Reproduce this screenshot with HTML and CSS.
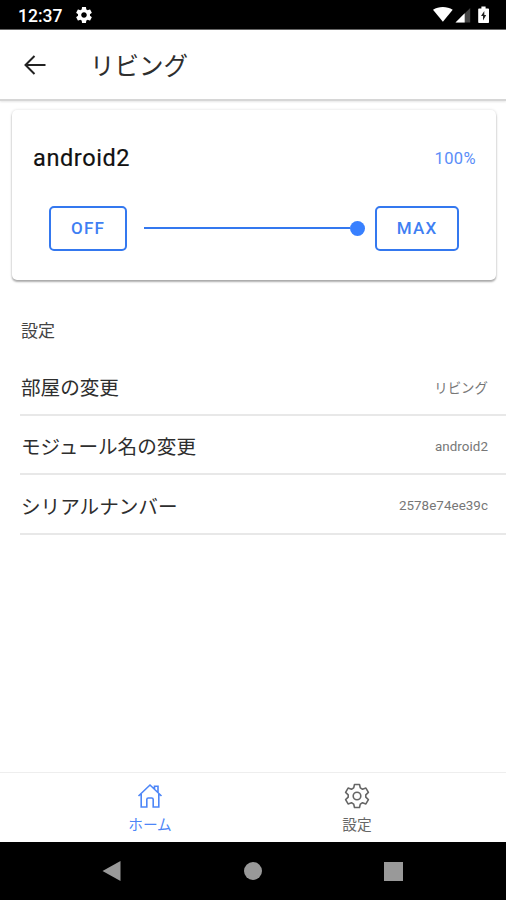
FILE: index.html
```html
<!DOCTYPE html>
<html lang="ja">
<head>
    <meta charset="UTF-8">
    <meta name="viewport" content="width=device-width, initial-scale=1.0">
    <title>リビング</title>
    <link rel="stylesheet" href="styles.css">
</head>
<body>
    <div class="status-bar">
        <span class="clock">12:37</span>
        <svg class="status-gear" viewBox="2 2 20 20" width="16" height="16">
            <path fill="#fff" fill-rule="evenodd" d="M19.43 12.98c.04-.32.07-.64.07-.98s-.03-.66-.07-.98l2.11-1.65c.19-.15.24-.42.12-.64l-2-3.46c-.12-.22-.39-.3-.61-.22l-2.49 1c-.52-.4-1.08-.73-1.69-.98l-.38-2.65C14.46 2.18 14.25 2 14 2h-4c-.25 0-.46.18-.49.42l-.38 2.65c-.61.25-1.17.59-1.69.98l-2.49-1c-.23-.09-.49 0-.61.22l-2 3.46c-.13.22-.07.49.12.64l2.11 1.65c-.04.32-.07.65-.07.98s.03.66.07.98l-2.11 1.65c-.19.15-.24.42-.12.64l2 3.46c.12.22.39.3.61.22l2.49-1c.52.4 1.08.73 1.69.98l.38 2.65c.03.24.24.42.49.42h4c.25 0 .46-.18.49-.42l.38-2.65c.61-.25 1.17-.59 1.69-.98l2.49 1c.23.09.49 0 .61-.22l2-3.46c.12-.22.07-.49-.12-.64l-2.11-1.65zM12 15.5c-1.93 0-3.5-1.57-3.5-3.5s1.57-3.5 3.5-3.5 3.5 1.57 3.5 3.5-1.57 3.5-3.5 3.5z"/>
        </svg>
        <svg class="status-icons" viewBox="0 0 58 18" width="58" height="18">
            <path fill="#fff" d="M0 3.800C5.700 0 13.900 0 19.700 3.800L9.900 15.800z"/>
            <path fill="#444" d="M37.200 2v14.500H22.500z"/>
            <path fill="#fff" d="M31.700 7.200v9.300h-9.200z"/>
            <path fill="#fff" d="M46 2.500h2.400V.5h4.200v2h2.600q.8 0 .8.800v13q0 .8-.8.800h-9.200q-.8 0-.8-.8v-13q0-.8.800-.8z"/>
            <path fill="#222" d="M51.300 5 48 10h2v4.500L53.200 9h-1.900z"/>
        </svg>
    </div>

    <header class="header">
        <svg viewBox="0 0 22 20" width="22" height="20">
            <path d="M21.500 10H2M10.500 1 1.500 10l9 9" fill="none" stroke="#222" stroke-width="2"/>
        </svg>
        <h1 class="title">リビング</h1>
    </header>

    <main class="content">
        <section class="card">
            <div class="card-head">
                <h2 class="device-name">android2</h2>
                <span class="percent">100%</span>
            </div>
            <div class="controls">
                <button class="button off">OFF</button>
                <div class="range">
                    <div class="range-bar"></div>
                    <div class="range-knob"></div>
                </div>
                <button class="button max">MAX</button>
            </div>
        </section>

        <h3 class="list-header">設定</h3>
        <ul class="list">
            <li class="item">
                <span class="label">部屋の変更</span>
                <span class="note">リビング</span>
            </li>
            <li class="item">
                <span class="label">モジュール名の変更</span>
                <span class="note">android2</span>
            </li>
            <li class="item">
                <span class="label">シリアルナンバー</span>
                <span class="note">2578e74ee39c</span>
            </li>
        </ul>
    </main>

    <nav class="tabs">
        <a class="tab selected">
            <svg viewBox="0 0 26 26" width="26" height="26">
                <path d="M1.500 13 13 2l11.500 11M17.500 6.300V3.200h3.500v6.400M4.200 11v13h5.600v-7.500q0-1.500 1.500-1.500h3.400q1.500 0 1.500 1.500V24h5.600V11" fill="none" stroke="currentColor" stroke-width="1.600"/>
            </svg>
            <span>ホーム</span>
        </a>
        <a class="tab">
            <svg viewBox="0 0 26 26" width="26" height="26">
                <path d="M10.500 1.500h5l.8 3.400 2.200 1.300 3.400-1.100 2.500 4.300-2.600 2.400v2.400l2.600 2.400-2.500 4.300-3.400-1.100-2.200 1.300-.8 3.400h-5l-.8-3.400-2.200-1.300-3.400 1.100-2.500-4.300 2.600-2.400v-2.400l-2.600-2.400 2.500-4.300 3.400 1.100 2.200-1.300z" fill="none" stroke="currentColor" stroke-width="1.600" stroke-linejoin="round"/>
                <circle cx="13" cy="13" r="3.800" fill="none" stroke="currentColor" stroke-width="1.600"/>
            </svg>
            <span>設定</span>
        </a>
    </nav>

    <div class="nav-bar">
        <svg viewBox="0 0 20 22" width="20" height="22"><path fill="#999" d="M18.500 1v20L.500 11z"/></svg>
        <div class="nav-home"></div>
        <div class="nav-recent"></div>
    </div>
</body>
</html>
```
FILE: styles.css
```css
* {
    box-sizing: border-box;
}

body {
    margin: 0;
    height: 900px;
    display: flex;
    flex-direction: column;
    overflow: hidden;
    background-color: #fff;
    color: #2e2e2e;
    font-family: Roboto, "Noto Sans CJK JP", sans-serif;
}

h1, h2, h3, ul {
    margin: 0;
    padding: 0;
    font-weight: 400;
}

.status-bar {
    height: 30px;
    background-color: #000;
    border-bottom: 1px solid #666;
    display: flex;
    align-items: center;
    padding: 1px 15px 0 18px;
    color: #fff;
}

.clock {
    width: 58px;
    font-size: 17.5px;
    font-weight: 500;
    padding-top: 2px;
}

.status-icons {
    margin-left: auto;
}

.header {
    height: 71px;
    display: flex;
    align-items: center;
    padding-left: 24px;
    border-bottom: 2px solid #d6d6d6;
    box-shadow: 0 1px 2px rgba(0, 0, 0, 0.1);
}

.title {
    margin-left: 44px;
    padding-top: 4px;
    font-size: 24.5px;
    line-height: 36px;
}

.content {
    flex: 1;
}

.card {
    margin: 9px 10px 0 12px;
    height: 170px;
    padding: 0 20px 0 21px;
    border-radius: 5px;
    box-shadow: 0 2px 2px rgba(0, 0, 0, 0.3), 0 0 3px rgba(0, 0, 0, 0.14);
}

.card-head {
    height: 96px;
    display: flex;
    align-items: center;
    justify-content: space-between;
}

.device-name {
    font-size: 23.5px;
    letter-spacing: 0.6px;
    color: #111;
    -webkit-text-stroke: 0.2px #111;
}

.percent {
    font-size: 16.5px;
    letter-spacing: 0.4px;
    color: #5b8df8;
}

.controls {
    display: flex;
    align-items: center;
    padding: 0 17px 0 16px;
}

.button {
    height: 45px;
    padding: 0 0 2px;
    border: 2px solid #3478ef;
    border-radius: 5px;
    background-color: transparent;
    color: #3f7ff3;
    font-family: inherit;
    font-size: 17px;
    font-weight: 500;
    letter-spacing: 1.2px;
}

.off {
    width: 78px;
}

.max {
    width: 84px;
}

.range {
    flex: 1;
    display: flex;
    align-items: center;
    margin: 0 10px 1px 17px;
}

.range-bar {
    flex: 1;
    height: 2px;
    background-color: #3478ef;
}

.range-knob {
    width: 15px;
    height: 15px;
    border-radius: 50%;
    background-color: #3880ff;
}

.list-header {
    margin: 39px 0 0 21px;
    font-size: 17px;
    line-height: 24px;
    color: #444;
}

.list {
    margin: 14px 0 0 20px;
    list-style: none;
}

.item {
    height: 59px;
    display: flex;
    align-items: center;
    justify-content: space-between;
    padding: 2px 18px 0 1px;
    border-bottom: 2px solid #e8e8e8;
}

.item:last-child {
    height: 60px;
}

.label {
    font-size: 19.6px;
}

.note {
    font-size: 13.4px;
    letter-spacing: 0.05px;
    color: #777;
    padding-top: 1px;
}

.tabs {
    height: 70px;
    display: flex;
    justify-content: center;
    padding-left: 1px;
    border-top: 1px solid #eee;
}

.tab {
    width: 207px;
    display: flex;
    flex-direction: column;
    align-items: center;
    padding-top: 10px;
    font-size: 14.7px;
    line-height: 20px;
    color: #666;
}

.tab span {
    margin-top: 6px;
}

.tab.selected {
    color: #4d86f7;
}

.nav-bar {
    height: 58px;
    background-color: #000;
    display: flex;
    align-items: center;
    justify-content: center;
    gap: 122px;
    padding-right: 2px;
}

.nav-home {
    width: 18px;
    height: 18px;
    border-radius: 50%;
    background-color: #999;
}

.nav-recent {
    width: 19px;
    height: 19px;
    background-color: #999;
}
```
